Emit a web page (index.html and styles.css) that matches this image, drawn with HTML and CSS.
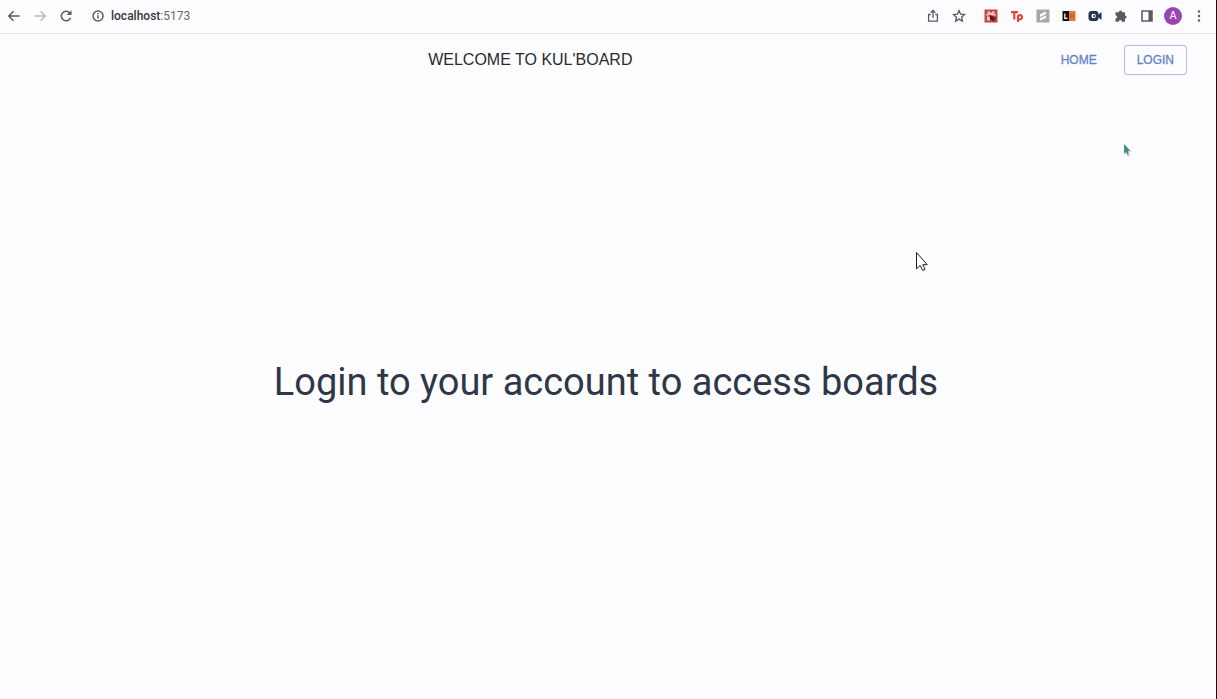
FILE: index.html
```
<!DOCTYPE html>
<html lang="en">
<head>
<meta charset="utf-8">
<meta name="viewport" content="width=device-width, initial-scale=1">
<title>Kul'Board</title>
<link rel="stylesheet" href="styles.css">
</head>
<body>
<div class="window">
  <div class="browser-bar">
    <button class="tool" aria-label="Back"><svg viewBox="0 0 16 16"><path class="line" d="M13.500 8H3M7.500 3.300L2.800 8l4.700 4.700"/></svg></button>
    <button class="tool tool-disabled" aria-label="Forward"><svg viewBox="0 0 16 16"><path class="line" d="M2.500 8H13M8.500 3.300L13.200 8l-4.700 4.700"/></svg></button>
    <button class="tool" aria-label="Reload"><svg viewBox="0 0 16 16"><path class="line" d="M12.600 9.800A4.800 4.800 0 1 1 11.500 4.600L12.700 5.800"/><path class="fill" d="M13.500 2.300V7.100H8.700z"/></svg></button>
    <button class="tool tool-apart" aria-label="Site information"><svg viewBox="0 0 16 16"><circle class="line" cx="8" cy="8" r="5"/><path class="line" d="M8 7.300v3.300M8 4.900v1.300"/></svg></button>
    <div class="address"><b>localhost</b>:5173</div>
    <button class="tool" aria-label="Share"><svg viewBox="0 0 16 16"><path class="line thin" d="M5.700 6.500H3.600v6.700h8.800V6.500h-2.100M8 10V2.800M5.700 4.800L8 2.500l2.300 2.300"/></svg></button>
    <button class="tool" aria-label="Bookmark"><svg viewBox="0 0 16 16"><path class="line thin" d="M8 2.600l1.600 3.600 3.900.400-2.900 2.600.8 3.900L8 11.100l-3.400 2 .8-3.900-2.900-2.600 3.900-.4z"/></svg></button>
    <button class="tool tool-apart" aria-label="Gift extension"><svg viewBox="0 0 16 16"><rect x="1.500" y="1.500" width="13" height="13" fill="#c0473f"/><path d="M3 6l2.500-.5L4 4l2-1 2 2 2-2 2 1-1.500 1.500L13 6v1.500H3zM4 8.500h3v4H4z" fill="#f0c4bb"/><path d="M6.500 6.500l6 3.500-1.500 3.500-4-2z" fill="#54201e"/></svg></button>
    <button class="tool" aria-label="Tp extension"><svg viewBox="0 0 16 16"><path d="M2 4.200h7M5.300 4v7.500M9 14V7.500M9 8.500c1-2.300 4.200-1.500 4 .8-.2 2.200-3 2.800-4 1" fill="none" stroke="#d84a43" stroke-width="2.200"/></svg></button>
    <button class="tool" aria-label="Stripe extension"><svg viewBox="0 0 16 16"><rect x="1.500" y="1.500" width="13" height="13" fill="#a8a8a8"/><path d="M5 6.300L11 3.500v2.600L5 8.900zM5 10.200l6-2.800V10l-6 2.800z" fill="#fff"/></svg></button>
    <button class="tool" aria-label="LH extension"><svg viewBox="0 0 16 16"><path d="M1.500 3H8v10H1.500z" fill="#111"/><path d="M8 3h6.500v10H8z" fill="#e57a38"/><path d="M3.800 5.500v4.800h2.700" fill="none" stroke="#fff" stroke-width="1.200"/><path d="M9.800 5.500v5M12.700 5.500v5M9.800 8h2.900" fill="none" stroke="#b5542a" stroke-width=".8"/></svg></button>
    <button class="tool" aria-label="Video extension"><svg viewBox="0 0 16 16"><rect x="1.500" y="3" width="10" height="10" rx="3" fill="#24344f"/><path d="M11 7l3.500-3v8L11 9z" fill="#24344f"/><circle cx="6.600" cy="8" r="2.200" fill="#fff"/><circle cx="7" cy="8" r="1" fill="#24344f"/></svg></button>
    <button class="tool" aria-label="Extensions"><svg viewBox="0 0 16 16"><path class="fill" d="M2.500 4.200h3.400a1.600 1.600 0 1 1 3.200 0H12v3.300a1.600 1.600 0 1 1 0 3.200v3H8.900a1.600 1.600 0 0 0-3.200 0H2.500v-3.200a1.600 1.600 0 0 0 0-3.200z"/></svg></button>
    <button class="tool" aria-label="Side panel"><svg viewBox="0 0 16 16"><path class="line" d="M3 3h10v10H3z"/><path class="fill" d="M9.500 3H13v10H9.500z"/></svg></button>
    <button class="tool" aria-label="Profile"><span class="avatar">A</span></button>
    <button class="tool" aria-label="Menu"><svg viewBox="0 0 16 16"><circle class="fill" cx="8" cy="3.500" r="1.200"/><circle class="fill" cx="8" cy="8" r="1.200"/><circle class="fill" cx="8" cy="12.500" r="1.200"/></svg></button>
  </div>
  <header class="app-bar">
    <h1 class="app-title">WELCOME TO KUL'BOARD</h1>
    <nav class="app-nav">
      <a class="nav-link" href="#">HOME</a>
      <button class="nav-link login">LOGIN</button>
    </nav>
  </header>
  <main class="content">
    <h2 class="message">Login to your account to access boards</h2>
  </main>
  <svg class="pointer pointer-remote" viewBox="0 0 10 16" aria-hidden="true"><path d="M1 1v11l2.500-2 1.500 4 2.500-1-1.500-3.500 3-.5z" fill="#d9dadd"/><path d="M1 1v9.500l2-1.500 1.500 3 1-.500L5 8l2-.5z" fill="#3b8f91"/></svg>
  <svg class="pointer pointer-local" viewBox="0 0 14 21" aria-hidden="true"><path d="M1.500 1.500v16.300l3.700-3.300 2.500 5 2.400-1.200-2.300-4.600h4.400z" fill="#fff" stroke="#1c1c22"/></svg>
</div>
</body>
</html>
```
FILE: styles.css
```
* {
  box-sizing: border-box;
}

body {
  margin: 0;
  background: #fdfdff;
  font-family: "Liberation Sans", Arial, sans-serif;
}

button {
  margin: 0;
  padding: 0;
  border: 0;
  background: none;
  font: inherit;
}

.window {
  position: relative;
  display: flex;
  flex-direction: column;
  min-height: 100vh;
  border-right: 1px solid #111;
}

.browser-bar {
  display: flex;
  align-items: center;
  height: 34px;
  padding: 0 4px 2px 1px;
  border-bottom: 1px solid #e6e6e9;
}

.tool {
  display: flex;
  flex: none;
  align-items: center;
  justify-content: center;
  width: 26px;
  height: 26px;
  color: #5a5b60;
}

.tool svg {
  width: 16px;
  height: 16px;
}

.tool-disabled {
  color: #bbbcc0;
}

.tool-apart {
  margin-left: 6px;
}

.line {
  fill: none;
  stroke: currentColor;
  stroke-width: 1.5;
}

.thin {
  stroke-width: 1.3;
}

.fill {
  fill: currentColor;
}

.address {
  flex: 1;
  color: #66676d;
  font-family: Roboto, sans-serif;
  font-size: 12px;
}

.address b {
  color: #35363c;
  font-weight: 500;
}

.avatar {
  width: 18px;
  height: 18px;
  border-radius: 50%;
  background: #9b46b0;
  color: #fff;
  font-size: 10px;
  line-height: 18px;
  text-align: center;
}

.app-bar {
  display: flex;
  align-items: center;
  height: 51px;
  padding: 0 29px 0 12px;
}

.app-title {
  flex: 1;
  margin: 0;
  color: #29292c;
  font-size: 16px;
  font-weight: 400;
  text-align: center;
}

.app-nav {
  display: flex;
  align-items: center;
  gap: 15px;
}

.nav-link {
  padding: 0 12px;
  color: #6484c4;
  font-size: 12px;
  line-height: 28px;
  text-decoration: none;
  -webkit-text-stroke: 0.3px #6484c4;
}

.login {
  border: 1px solid #a9bfe2;
  border-radius: 3px;
}

.content {
  display: flex;
  flex: 1;
  align-items: center;
  justify-content: center;
  padding: 0 4px 20px 0;
}

.message {
  margin: 0;
  color: #2d3748;
  font-family: Roboto, sans-serif;
  font-size: 38px;
  font-weight: 400;
  line-height: 48px;
}

.pointer {
  position: absolute;
}

.pointer-remote {
  top: 143px;
  left: 1123px;
  width: 10px;
  height: 16px;
}

.pointer-local {
  top: 251px;
  left: 915px;
  width: 14px;
  height: 21px;
}
```
